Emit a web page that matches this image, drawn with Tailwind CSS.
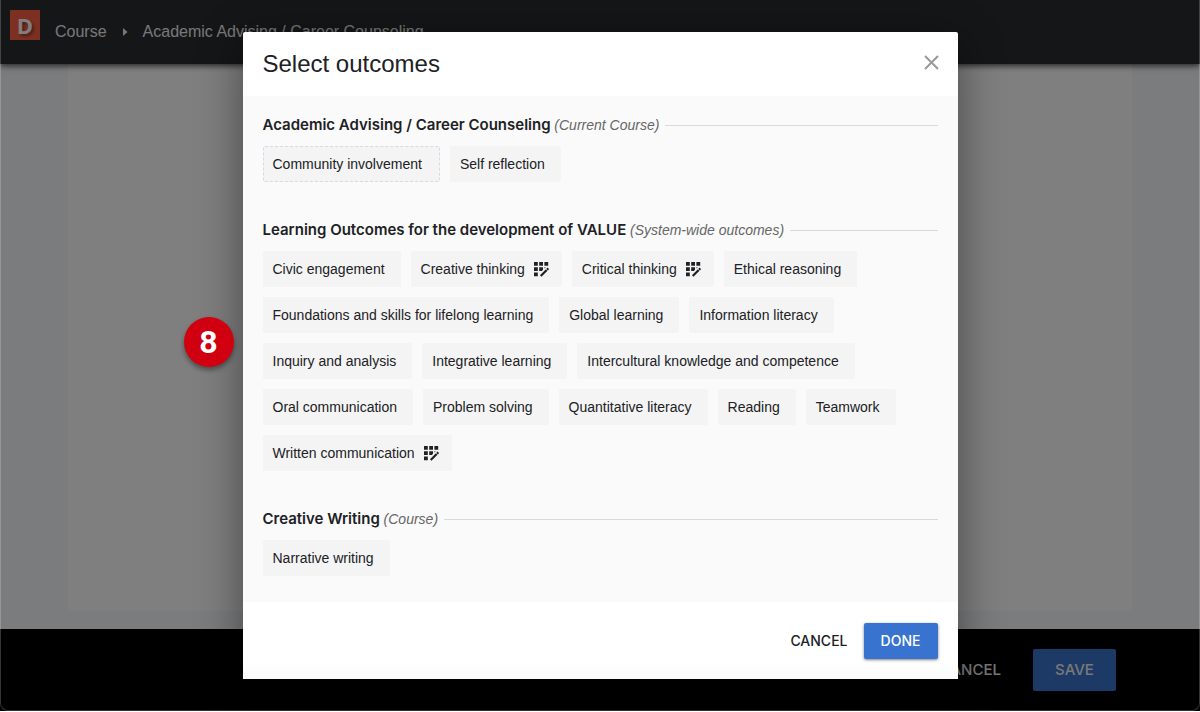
<!DOCTYPE html>
<html lang="en">
<head>
<meta charset="utf-8">
<meta name="viewport" content="width=device-width, initial-scale=1">
<title>Select outcomes</title>
<script src="https://cdn.jsdelivr.net/npm/@tailwindcss/browser@4"></script>
</head>
<body class="bg-white font-['Liberation_Sans',Arial,sans-serif] text-[#202124]">
<svg class="hidden" aria-hidden="true">
  <symbol id="rubric" viewBox="0 0 15 15">
    <path fill="currentColor" d="M0 0h3.800v3.800H0zM5.200 0H9v3.800H5.200zM10.400 0h3.800v3.800h-3.800zM0 5.200h3.800V9H0zM5.200 5.200H9V7.800L7.800 9H5.200zM0 10.400h3.800v3.800H0zM10.400 5.200h1.400l-1.400 1.400z"/>
    <path stroke="currentColor" stroke-width="2.200" d="M6.700 14l6-6M13.100 7.600l1.200-1.200"/>
  </symbol>
</svg>
<div class="relative mb-px flex min-h-[calc(100vh-1px)] flex-col overflow-hidden bg-[#f6f8fc]">
  <header class="relative z-10 flex h-16 items-start bg-[#282c2e] pl-[10px] shadow-[0_2px_6px_rgba(0,0,0,0.7)]">
    <a href="#" aria-label="Home" class="mt-[10px] flex size-[30px] items-center justify-center bg-[#fa6045] font-['Open_Sans',sans-serif] text-[22px] leading-none font-bold text-white [text-shadow:2px_2px_3px_rgba(0,0,0,0.4)]">D</a>
    <nav aria-label="Breadcrumb" class="ml-[15px] flex h-16 items-center text-base text-[#f0f0f0]">
      <a href="#">Course</a>
      <svg class="mx-[15px] h-2 w-[6px]" viewBox="0 0 6 8" fill="currentColor"><path d="M1 0l4.500 4L1 8z"/></svg>
      <a href="#">Academic Advising / Career Counseling</a>
    </nav>
  </header>
  <main class="flex flex-1 px-[68px] pb-[18px]">
    <div class="flex-1 bg-white"></div>
  </main>
  <footer class="flex h-[82px] items-center justify-end gap-4 bg-black pr-[84px] font-[Inter,sans-serif] text-[15px] font-medium">
    <button type="button" class="h-[42px] px-4 text-[#f0f0f0]">CANCEL</button>
    <button type="button" class="h-[42px] w-[83px] rounded-xs bg-[#3874cb] text-[#f0f0f0]">SAVE</button>
  </footer>

  <div class="absolute inset-0 z-20 flex items-start justify-center rounded-b-lg border border-t-0 border-white/20 bg-black/50 pt-8">
    <section role="dialog" aria-modal="true" aria-labelledby="title" class="relative w-full max-w-[715px] rounded-xs bg-white shadow-[0_10px_46px_rgba(0,0,0,0.45)]">
      <header class="flex h-16 items-center justify-between pr-[19px] pl-5">
        <h1 id="title" class="text-2xl">Select outcomes</h1>
        <button type="button" aria-label="Close" class="text-[#999]">
          <svg class="mb-1 size-[15px]" viewBox="0 0 15 15" fill="none" stroke="currentColor" stroke-width="2"><path d="M1 1l13 13M14 1L1 14"/></svg>
        </button>
      </header>

      <div class="flex flex-col gap-[37px] bg-[#fafafa] px-5 pt-[18px] pb-[26px]">
        <section>
          <div class="flex h-[22px] items-center gap-[6px]">
            <h2 class="font-[Inter,sans-serif] text-[15px] font-semibold">Academic Advising / Career Counseling <span class="font-['Liberation_Sans',Arial,sans-serif] text-sm font-normal text-[#666] italic">(Current Course)</span></h2>
            <span class="h-px flex-1 bg-[#d9dadb]"></span>
          </div>
          <div class="mt-[10px] flex flex-wrap gap-[10px] text-sm">
            <button type="button" class="h-9 rounded-xs border border-dashed border-[#d8d9e8] bg-[#f4f4f4] pr-[17px] pl-[9px]">Community involvement</button>
            <button type="button" class="h-9 rounded-xs bg-[#f4f4f4] pr-4 pl-[10px]">Self reflection</button>
          </div>
        </section>

        <section>
          <div class="flex h-[22px] items-center gap-[6px]">
            <h2 class="font-[Inter,sans-serif] text-[15px] font-semibold">Learning Outcomes for the development of VALUE <span class="font-['Liberation_Sans',Arial,sans-serif] text-sm font-normal text-[#666] italic">(System-wide outcomes)</span></h2>
            <span class="h-px flex-1 bg-[#d9dadb]"></span>
          </div>
          <div class="mt-[10px] flex flex-wrap gap-[10px] text-sm">
            <button type="button" class="h-9 rounded-xs bg-[#f4f4f4] pr-4 pl-[10px]">Civic engagement</button>
            <button type="button" class="flex h-9 items-center gap-[9px] rounded-xs bg-[#f4f4f4] pr-[13px] pl-[10px]">Creative thinking <svg class="size-[15px]"><use href="#rubric"/></svg></button>
            <button type="button" class="flex h-9 items-center gap-[9px] rounded-xs bg-[#f4f4f4] pr-[13px] pl-[10px]">Critical thinking <svg class="size-[15px]"><use href="#rubric"/></svg></button>
            <button type="button" class="h-9 rounded-xs bg-[#f4f4f4] pr-4 pl-[10px]">Ethical reasoning</button>
            <button type="button" class="h-9 rounded-xs bg-[#f4f4f4] pr-4 pl-[10px]">Foundations and skills for lifelong learning</button>
            <button type="button" class="h-9 rounded-xs bg-[#f4f4f4] pr-4 pl-[10px]">Global learning</button>
            <button type="button" class="h-9 rounded-xs bg-[#f4f4f4] pr-4 pl-[10px]">Information literacy</button>
            <button type="button" class="h-9 rounded-xs bg-[#f4f4f4] pr-4 pl-[10px]">Inquiry and analysis</button>
            <button type="button" class="h-9 rounded-xs bg-[#f4f4f4] pr-4 pl-[10px]">Integrative learning</button>
            <button type="button" class="h-9 rounded-xs bg-[#f4f4f4] pr-4 pl-[10px]">Intercultural knowledge and competence</button>
            <button type="button" class="h-9 rounded-xs bg-[#f4f4f4] pr-4 pl-[10px]">Oral communication</button>
            <button type="button" class="h-9 rounded-xs bg-[#f4f4f4] pr-4 pl-[10px]">Problem solving</button>
            <button type="button" class="h-9 rounded-xs bg-[#f4f4f4] pr-4 pl-[10px]">Quantitative literacy</button>
            <button type="button" class="h-9 rounded-xs bg-[#f4f4f4] pr-4 pl-[10px]">Reading</button>
            <button type="button" class="h-9 rounded-xs bg-[#f4f4f4] pr-4 pl-[10px]">Teamwork</button>
            <button type="button" class="flex h-9 items-center gap-[9px] rounded-xs bg-[#f4f4f4] pr-[13px] pl-[10px]">Written communication <svg class="size-[15px]"><use href="#rubric"/></svg></button>
          </div>
        </section>

        <section>
          <div class="flex h-[22px] items-center gap-[6px]">
            <h2 class="font-[Inter,sans-serif] text-[15px] font-semibold">Creative Writing <span class="font-['Liberation_Sans',Arial,sans-serif] text-sm font-normal text-[#666] italic">(Course)</span></h2>
            <span class="h-px flex-1 bg-[#d9dadb]"></span>
          </div>
          <div class="mt-[10px] flex flex-wrap gap-[10px] text-sm">
            <button type="button" class="h-9 rounded-xs bg-[#f4f4f4] pr-4 pl-[10px]">Narrative writing</button>
          </div>
        </section>
      </div>

      <footer class="flex h-[77px] items-center justify-end bg-linear-to-b from-white from-75% to-[#fbfbfb] pr-5 font-[Inter,sans-serif] text-sm font-medium">
        <button type="button" class="h-9 px-4">CANCEL</button>
        <button type="button" class="h-9 w-[74px] rounded-xs bg-[#3874cf] text-white shadow-[0_1px_3px_rgba(0,0,0,0.5)]">DONE</button>
      </footer>

      <div class="absolute top-[285px] -left-[59px] flex size-[50px] items-center justify-center rounded-full bg-[#d10010] font-[Roboto,sans-serif] text-[32px] leading-none font-bold text-white shadow-[0_3px_5px_rgba(0,0,0,0.4)]">8</div>
    </section>
  </div>
</div>
</body>
</html>
